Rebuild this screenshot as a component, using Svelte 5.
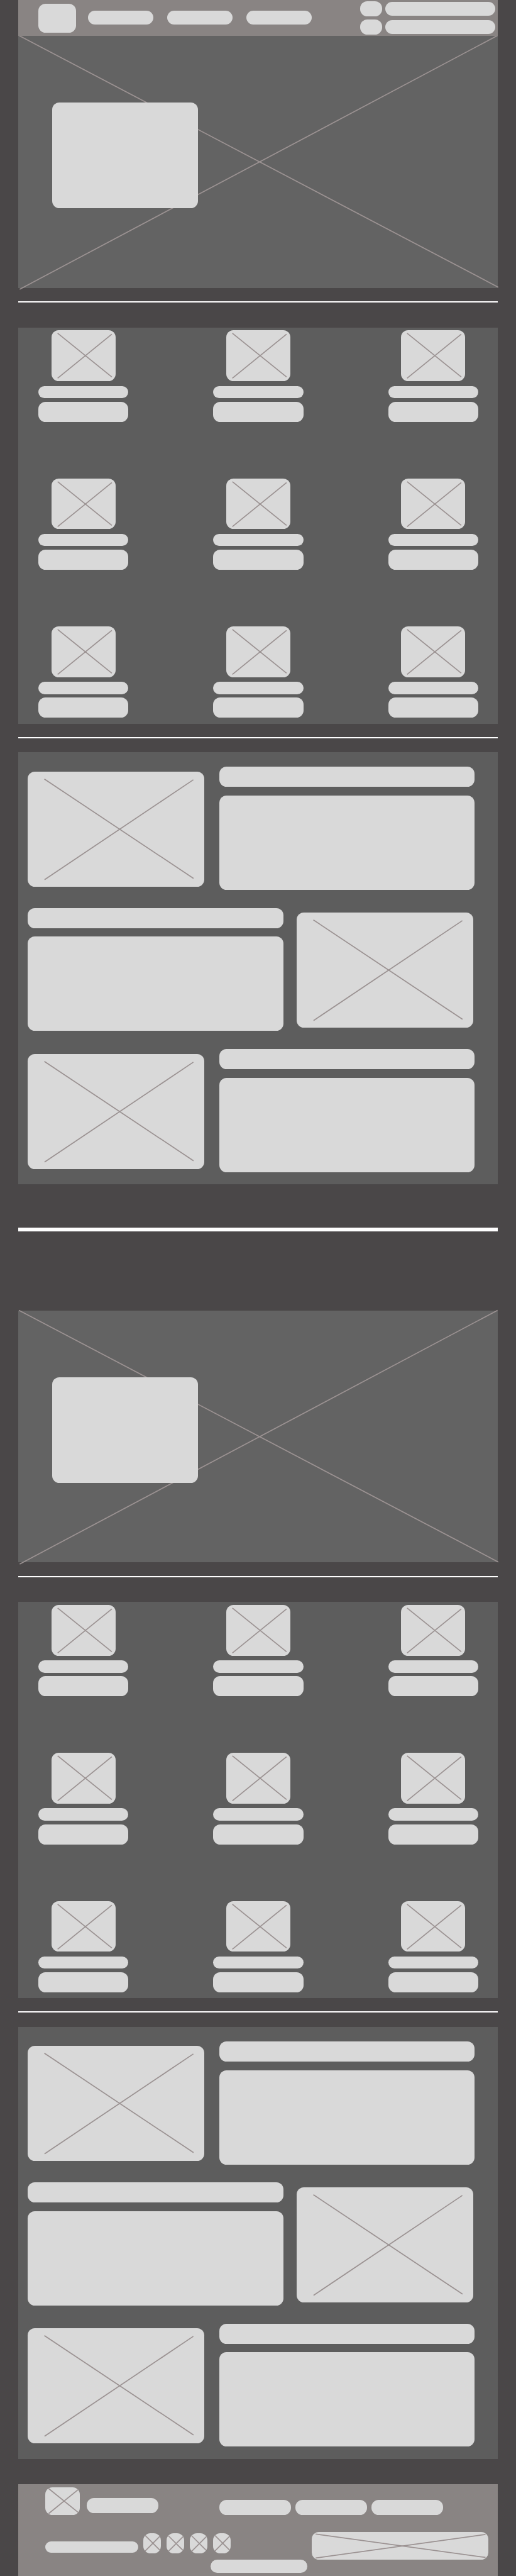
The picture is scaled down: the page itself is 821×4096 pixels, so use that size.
<script>
  const repeats = [0, 1];
  const cards = Array.from({ length: 9 }, (_, i) => i);
  const rows = [false, true, false];
  const socials = [0, 1, 1, 0];
</script>

{#snippet cross(w, h, a, b)}
  <svg class="cross" viewBox="0 0 {w} {h}" preserveAspectRatio="none" aria-hidden="true">
    <line x1={a[0]} y1={a[1]} x2={a[2]} y2={a[3]} />
    <line x1={b[0]} y1={b[1]} x2={b[2]} y2={b[3]} />
  </svg>
{/snippet}

<div class="page">
  <header>
    <div class="block logo"></div>
    <nav>
      <div class="block"></div>
      <div class="block"></div>
      <div class="block"></div>
    </nav>
    <div class="fields">
      <div class="block tag"></div>
      <div class="block field"></div>
      <div class="block tag"></div>
      <div class="block field"></div>
    </div>
  </header>

  {#each repeats as n}
    <section class="hero">
      {@render cross(1334, 700, [2, -1, 1334, 698], [4, 704, 1332, -1])}
      <div class="block card"></div>
    </section>
    <div class="rule after-hero"></div>

    <section class="grid">
      {#each cards as c}
        <article>
          <div class="block thumb">
            {@render cross(178, 141, [17, 8.5, 167.5, 130], [17, 133.5, 167.5, 11])}
          </div>
          <div class="block title"></div>
          <div class="block text"></div>
        </article>
      {/each}
    </section>
    <div class="rule after-grid"></div>

    <section class="features">
      {#each rows as flipped}
        <div class="row" class:flipped>
          <div class="block picture">
            {@render cross(491, 320, [46.5, 20.5, 461, 296.5], [47, 300, 460.5, 22.5])}
          </div>
          <div class="copy">
            <div class="block heading"></div>
            <div class="block body"></div>
          </div>
        </div>
      {/each}
    </section>
    {#if n === 0}
      <div class="thick"></div>
    {/if}
  {/each}

  <footer>
    <div class="top">
      <div class="block mark">{@render cross(97, 76, [9.5, 3.5, 92, 70], [9.5, 73, 92, 6])}</div>
      <div class="block link name"></div>
      <div class="block link"></div>
      <div class="block link"></div>
      <div class="block link"></div>
    </div>
    <div class="middle">
      <div class="block contact"></div>
      <div class="socials">
        {#each socials as dy}
          <div class="block icon">
            {@render cross(49, 57, [5, 6 + dy, 45.5, 46.5 + dy], [5, 49.5 + dy, 45.5, 9 + dy])}
          </div>
        {/each}
      </div>
      <div class="block map">
        {@render cross(490, 77, [10.5, 5.7, 483, 70.7], [11, 72.3, 483, 6.7])}
      </div>
    </div>
    <div class="block legal"></div>
  </footer>
</div>

<style>
  /* 1rem stands for 100 design units */
  :global(html) { font-size: 57.2467px; }
  :global(body) { margin: 0; background: #4a4748; }
  .page {
    box-sizing: border-box;
    width: 821px;
    height: 4096px;
    padding: 0 0.5rem;
    overflow: hidden;
    background: #4a4748;
    font-family: "Liberation Sans", sans-serif;
  }
  .block {
    box-sizing: border-box;
    flex: none;
    background: #d9d9d9;
    border-radius: 0.2rem;
  }
  .cross {
    display: block;
    width: 100%;
    height: 100%;
    overflow: visible;
  }
  .cross line { stroke: #9b9292; stroke-width: 3; }

  header {
    position: relative;
    z-index: 1;
    box-sizing: border-box;
    display: flex;
    align-items: center;
    height: 1rem;
    padding: 0 0.07rem 0 0.56rem;
    background: #898483;
  }
  .logo { width: 1.05rem; height: 0.8rem; }
  nav { display: flex; gap: 0.38rem; margin: -0.02rem 0 0 0.34rem; }
  nav .block { width: 1.82rem; height: 0.38rem; }
  .fields {
    display: grid;
    grid-template-columns: 0.61rem 3.07rem;
    gap: 0.08rem 0.09rem;
    align-items: center;
    margin-left: auto;
  }
  .tag { height: 0.42rem; }
  .field { height: 0.38rem; }

  .hero { display: grid; height: 7rem; background: #636363; }
  .hero > :global(*) { grid-area: 1 / 1; }
  .hero .card { width: 4.05rem; height: 2.94rem; margin: 1.85rem 0 0 0.95rem; z-index: 0; }

  /* whole-pixel rules, so that each one is drawn equally thick */
  .rule { height: 2px; background: #fff; }
  .after-hero { margin: 0.37rem 0 calc(0.73rem - 2px); }
  .after-grid { margin: 0.37rem 0 calc(0.43rem - 2px); }
  .thick { height: 0.1rem; margin: 1.2rem 0 2.2rem; background: #fff; }

  .grid {
    box-sizing: border-box;
    display: grid;
    grid-template-columns: repeat(3, 2.5rem);
    grid-auto-rows: 2.54rem;
    gap: 1.57rem 2.36rem;
    height: 11rem;
    padding: 0.08rem 0 0 0.57rem;
    background: #5d5d5d;
  }
  article { display: flex; flex-direction: column; align-items: center; }
  .thumb { width: 1.78rem; height: 1.41rem; }
  .title { width: 100%; height: 0.34rem; margin: 0.13rem 0 0.1rem; }
  .text { width: 100%; height: 0.56rem; }

  .features {
    box-sizing: border-box;
    display: flex;
    flex-direction: column;
    gap: 0.5rem;
    height: 12rem;
    padding: 0.4rem 0.65rem 0 0.27rem;
    background: #5d5d5d;
  }
  .row { display: flex; justify-content: space-between; height: 3.42rem; }
  .flipped { flex-direction: row-reverse; padding-right: 0.04rem; }
  .picture { width: 4.91rem; height: 3.2rem; margin-top: 0.13rem; }
  .copy { display: flex; flex-direction: column; gap: 0.24rem; width: 7.1rem; }
  .heading { height: 0.56rem; }
  .body { height: 2.62rem; }

  footer {
    box-sizing: border-box;
    display: flex;
    flex-direction: column;
    height: 2.57rem;
    margin-top: 0.7rem;
    padding: 0.09rem 0.27rem 0 0.75rem;
    background: #898483;
  }
  .top { display: flex; align-items: flex-end; gap: 0.12rem; height: 0.76rem; }
  .mark { width: 0.97rem; height: 0.76rem; }
  .link { width: 1.99rem; height: 0.41rem; }
  .name { margin: 0 1.57rem 0.05rem 0.08rem; }
  .middle { display: flex; height: 0.77rem; margin-top: 0.48rem; }
  .contact { width: 2.6rem; height: 0.32rem; margin: 0.26rem 0.14rem 0 0; }
  .socials { display: flex; gap: 0.153rem; margin-top: 0.03rem; }
  .icon { width: 0.49rem; height: 0.57rem; }
  .map { width: 4.9rem; height: 0.77rem; margin-left: auto; }
  .legal { width: 2.7rem; height: 0.37rem; margin-left: 4.6rem; }
</style>
